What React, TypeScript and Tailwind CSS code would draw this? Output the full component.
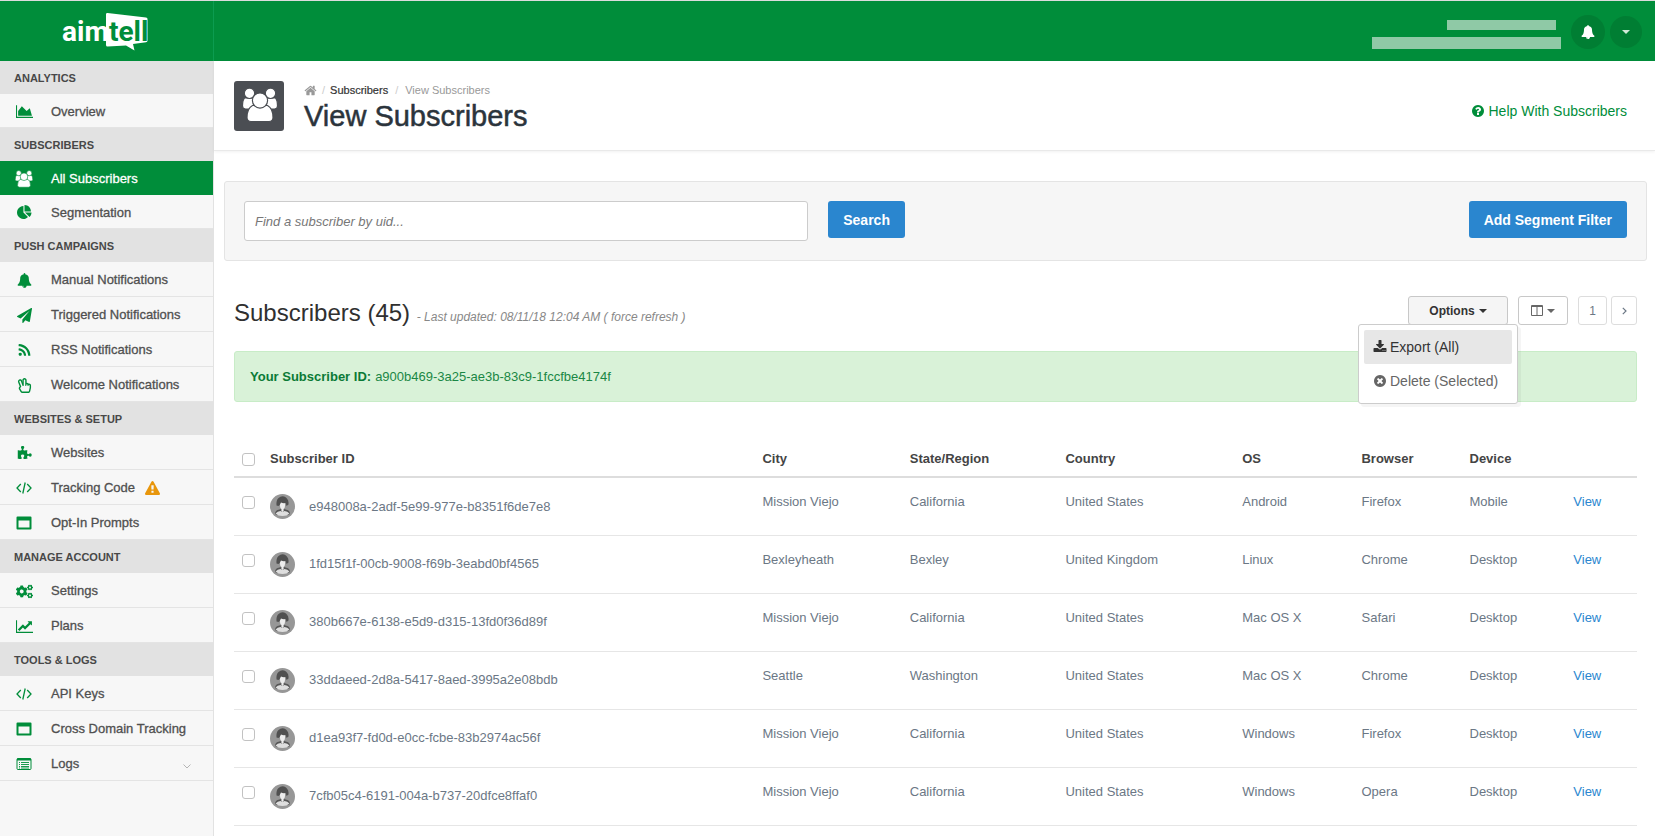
import React from "react";
import type { ReactNode } from "react";
import { FaRegHandPeace, FaCogs } from "react-icons/fa";

const PATHS = {
  area: "M2048 1536v128h-2048v-1536h128v1408h1920zm-384-1024l256 896h-1664v-576l448-576 576 576z",
  line: "M2048 1536v128h-2048v-1536h128v1408h1920zm-128-1248v435q0 21-19.5 29.5t-35.5-7.5l-121-121-633 633q-10 10-23 10t-23-10l-233-233-416 416-192-192 585-585q10-10 23-10t23 10l233 233 464-464-121-121q-16-16-7.5-35.5t29.5-19.5h435q14 0 23 9t9 23z",
  pie: "M768 890l546 546q-106 108-247.5 168t-298.5 60q-209 0-385.5-103t-279.5-279.5-103-385.5 103-385.5 279.5-279.5 385.5-103v762zm187 6h773q0 157-60 298.5t-168 247.5zm709-128h-768v-768q209 0 385.5 103t279.5 279.5 103 385.5z",
  bell: "M912 1696q0-16-16-16-59 0-101.5-42.5t-42.5-101.5q0-16-16-16t-16 16q0 73 51.5 124.5t124.5 51.5q16 0 16-16zm816-288q0 52-38 90t-90 38h-448q0 106-75 181t-181 75-181-75-75-181h-448q-52 0-90-38t-38-90q50-42 91-88t85-119.5 74.5-158.5 50-206 19.5-260q0-152 117-282.5t307-158.5q-8-19-8-39 0-40 28-68t68-28 68 28 28 68q0 20-8 39 190 28 307 158.5t117 282.5q0 139 19.5 260t50 206 74.5 158.5 85 119.5 91 88z",
  plane: "M1764 11q33 24 27 64l-256 1536q-5 29-32 45-14 8-31 8-11 0-24-5l-453-185-242 295q-18 23-49 23-13 0-22-4-19-7-30.5-23.5t-11.5-36.5v-349l864-1059-1069 925-395-162q-37-14-40-55-2-40 32-59l1664-960q15-9 32-9 20 0 36 11z",
  rss: "M576 1344q0 80-56 136t-136 56-136-56-56-136 56-136 136-56 136 56 56 136zm512 123q2 28-17 48-18 21-47 21h-135q-25 0-43-16.5t-20-41.5q-22-229-184.5-391.5t-391.5-184.5q-25-2-41.5-20t-16.5-43v-135q0-29 21-47 17-17 43-17h5q160 13 306 80.5t259 181.5q114 113 181.5 259t80.5 306zm512 2q2 27-18 47-18 20-46 20h-143q-26 0-44.5-17.5t-19.5-42.5q-12-215-101-408.5t-231.5-336-336-231.5-408.5-102q-25-1-42.5-19.5t-17.5-43.5v-143q0-28 20-46 18-18 44-18h3q262 13 501.5 120t425.5 294q187 186 294 425.5t120 501.5z",
  puzzle: "M1755 1083q0 81-44.5 135t-123.5 54q-41 0-77.5-17.5t-59-38-56.5-38-71-17.5q-110 0-110 124 0 39 16 115t15 115v5q-22 0-33 1-34 3-97.5 11.5t-115.5 13.5-98 5q-61 0-103-26.5t-42-83.5q0-37 17.5-71t38-56.5 38-59 17.5-77.5q0-79-54-123.5t-135-44.5q-84 0-143 45.5t-59 127.5q0 43 15 83t33.5 64.5 33.5 53 15 50.5q0 45-46 89-37 35-117 35-95 0-245-24-9-2-27.5-4t-27.5-4l-13-2q-1 0-3-1-2 0-2-1v-1024q2 1 17.5 3.5t34 5 21.5 3.5q150 24 245 24 80 0 117-35 46-44 46-89 0-22-15-50.5t-33.5-53-33.5-64.5-15-83q0-82 59-127.5t144-45.5q80 0 134 44.5t54 123.5q0 41-17.5 77.5t-38 59-38 56.5-17.5 71q0 57 42 83.5t103 26.5q64 0 180-15t163-17v2q-1 2-3.5 17.5t-5 34-3.5 21.5q-24 150-24 245 0 80 35 117 44 46 89 46 22 0 50.5-15t53-33.5 64.5-33.5 83-15q82 0 127.5 59t45.5 143z",
  download: "M1344 1344q0-26-19-45t-45-19-45 19-19 45 19 45 45 19 45-19 19-45zm256 0q0-26-19-45t-45-19-45 19-19 45 19 45 45 19 45-19 19-45zm128-224v320q0 40-28 68t-68 28h-1472q-40 0-68-28t-28-68v-320q0-40 28-68t68-28h465l135 136q58 56 136 56t136-56l136-136h464q40 0 68 28t28 68zm-325-569q17 41-14 70l-448 448q-18 19-45 19t-45-19l-448-448q-31-29-14-70 17-39 59-39h256v-448q0-26 19-45t45-19h256q26 0 45 19t19 45v448h256q42 0 59 39z",
  times: "M1277 1122q0-26-19-45l-181-181 181-181q19-19 19-45 0-27-19-46l-90-90q-19-19-46-19-26 0-45 19l-181 181-181-181q-19-19-45-19-27 0-46 19l-90 90q-19 19-19 46 0 26 19 45l181 181-181 181q-19 19-19 45 0 27 19 46l90 90q19 19 46 19 26 0 45-19l181-181 181 181q19 19 45 19 27 0 46-19l90-90q19-19 19-46zm387-226q0 209-103 385.5t-279.5 279.5-385.5 103-385.5-103-279.5-279.5-103-385.5 103-385.5 279.5-279.5 385.5-103 385.5 103 279.5 279.5 103 385.5z",
  warning: "M1024 1375v-190q0-14-9.5-23.5t-22.5-9.5h-192q-13 0-22.5 9.5t-9.5 23.5v190q0 14 9.5 23.5t22.5 9.5h192q13 0 22.5-9.5t9.5-23.5zm-2-374l18-459q0-12-10-19-13-11-24-11h-220q-11 0-24 11-10 7-10 21l17 457q0 10 10 16.5t24 6.5h185q14 0 23.5-6.5t10.5-16.5zm-14-934l768 1408q35 63-2 126-17 29-46.5 46t-63.5 17h-1536q-34 0-63.5-17t-46.5-46q-37-63-2-126l768-1408q17-31 47-49t65-18 65 18 47 49z",
  home: "M1472 992v480q0 26-19 45t-45 19h-384v-384h-256v384h-384q-26 0-45-19t-19-45v-480q0-1 .5-3t.5-3l575-474 575 474q1 2 1 6zm223-69l-62 74q-8 9-21 11h-3q-13 0-21-7l-692-577-692 577q-12 8-24 7-13-2-21-11l-62-74q-8-10-7-23.5t11-21.5l719-599q32-26 76-26t76 26l244 204v-195q0-14 9-23t23-9h192q14 0 23 9t9 23v408l219 182q10 8 11 21.5t-7 23.5z",
  question: "M1024 1376v-192q0-14-9-23t-23-9h-192q-14 0-23 9t-9 23v192q0 14 9 23t23 9h192q14 0 23-9t9-23zm256-672q0-88-55.5-163t-138.5-116-170-41q-243 0-371 213-15 24 8 42l132 100q7 6 19 6 16 0 25-12 53-68 86-92 34-24 86-24 48 0 85.5 26t37.5 59q0 38-20 61t-68 45q-63 28-115.5 86.5t-52.5 125.5v36q0 14 9 23t23 9h192q14 0 23-9t9-23q0-19 21.5-49.5t54.5-49.5q32-18 49-28.5t46-35 44.5-48 28-60.5 12.5-81zm384 192q0 209-103 385.5t-279.5 279.5-385.5 103-385.5-103-279.5-279.5-103-385.5 103-385.5 279.5-279.5 385.5-103 385.5 103 279.5 279.5 103 385.5z",
};

function Glyph({ name, size = 14, wide = false }: { name: keyof typeof PATHS; size?: number; wide?: boolean }) {
  return (
    <svg aria-hidden="true" className="block shrink-0" height={size} width={wide ? Math.round((size * 8) / 7) : size} viewBox={wide ? "0 0 2048 1792" : "0 0 1792 1792"} fill="currentColor">
      <path d={PATHS[name]} />
    </svg>
  );
}

function UsersIcon({ size, gap }: { size: number; gap: string }) {
  return (
    <svg aria-hidden="true" className="block" width={size} height={size} viewBox="9.5 6 36 36" fill="currentColor" stroke={gap} strokeWidth="1.2">
      <path d="M12 17h8q2 4 1 7l-3 4h-5q-3 0-3-3 0-6 2-8z" />
      <path d="M43 17h-8q-2 4-1 7l3 4h5q3 0 3-3 0-6-2-8z" />
      <circle cx="17" cy="12.3" r="5.2" />
      <circle cx="38" cy="12.3" r="5.2" />
      <path d="M20 24.5h15q5.500 3 5.500 12 0 4-4 4h-18q-4 0-4-4 0-9 5.500-12z" />
      <circle cx="27.500" cy="19.500" r="7.600" />
    </svg>
  );
}

function CodeIcon() {
  return (
    <svg aria-hidden="true" className="block" width="16" height="14" viewBox="0 0 16 14" fill="none" stroke="currentColor" strokeWidth="1.300">
      <path d="M4.800 3 1 7l3.800 4M11.200 3 15 7l-3.800 4M9.200 1.500 6.800 12.500" />
    </svg>
  );
}

function WindowIcon() {
  return (
    <svg aria-hidden="true" className="block" width="16" height="14" viewBox="0 0 16 14" fill="currentColor" fillRule="evenodd">
      <path d="M1.500 0.500h13q1 0 1 1v11q0 1-1 1h-13q-1 0-1-1v-11q0-1 1-1zM2.500 4.500v7h11v-7z" />
    </svg>
  );
}

function ListIcon() {
  return (
    <svg aria-hidden="true" className="block" width="16" height="14" viewBox="0 0 16 14" fill="none" stroke="currentColor">
      <rect x="1" y="1.500" width="14" height="11" rx="1" />
      <path d="M1 2.500h14" strokeWidth="2" />
      <path d="M3 5.500h1M5 5.500h8M3 7.500h1M5 7.500h8M3 9.500h1M5 9.500h8M3 11h1M5 11h8" strokeWidth="0.900" />
    </svg>
  );
}

function Caret() {
  return (
    <svg aria-hidden="true" className="block" width="8" height="4" viewBox="0 0 8 4" fill="currentColor">
      <path d="M0 0h8L4 4z" />
    </svg>
  );
}

function Logo() {
  return (
    <svg role="img" aria-label="aimtell" width="90" height="42" viewBox="0 0 90 42" className="block font-['Liberation_Sans_Narrow','Roboto',sans-serif] font-bold">
      <path d="M48.500 4 87 8.500q1.500.2 1.500 1.500v21.500q0 1.500-1.500 1.700L74 35l1.500 6.500L67 36.500 48.500 37.500q-1.500 0-1.500-1.500V5.300Q47 3.900 48.500 4z" fill="#fff" />
      <text x="3" y="32" fontSize="28" fill="#fff">aim</text>
      <text x="50" y="32" fontSize="28" fill="#008d3a">tell</text>
    </svg>
  );
}

function Avatar() {
  return (
    <svg aria-hidden="true" className="block shrink-0" width="25" height="25" viewBox="0 0 25 25">
      <circle cx="12.500" cy="12.500" r="12.500" fill="#979797" />
      <path d="M5 20q0-3.500 3.500-4.200l2.500-.8h3l2.500.8Q20 16.500 20 20l-2 1H7z" fill="#555" />
      <path d="M5.500 19.500q2-2.300 5-2.500l2 1 2-1q3 .2 5 2.500-2.500 2.500-7 2.500t-7-2.500z" fill="#dedede" />
      <path d="M10 8h5v4q0 2-1.400 3v2l-1.100 1-1.100-1v-2Q10 14 10 12z" fill="#ededed" />
      <path d="M6.500 11.500Q6 6 8.500 4q3.500-3 7.500-.5 3 2.500 2.500 7l-2 1.500-.8-3Q13 9.500 11 8.500q-1 2.500-2.500 3.500z" fill="#505050" />
    </svg>
  );
}

type Item = { label: string; icon: ReactNode; active?: boolean; warn?: boolean; expandable?: boolean };
type Section = { title: string; compact?: boolean; items: Item[] };

const SECTIONS: Section[] = [
  { title: "Analytics", compact: true, items: [{ label: "Overview", icon: <Glyph name="area" size={15} wide /> }] },
  {
    title: "Subscribers",
    compact: true,
    items: [
      { label: "All Subscribers", icon: <UsersIcon size={18} gap="#008d3a" />, active: true },
      { label: "Segmentation", icon: <Glyph name="pie" size={15} /> },
    ],
  },
  {
    title: "Push Campaigns",
    items: [
      { label: "Manual Notifications", icon: <Glyph name="bell" size={15} /> },
      { label: "Triggered Notifications", icon: <Glyph name="plane" size={15} /> },
      { label: "RSS Notifications", icon: <Glyph name="rss" size={15} /> },
      { label: "Welcome Notifications", icon: <FaRegHandPeace size={15} /> },
    ],
  },
  {
    title: "Websites & Setup",
    items: [
      { label: "Websites", icon: <Glyph name="puzzle" size={15} /> },
      { label: "Tracking Code", icon: <CodeIcon />, warn: true },
      { label: "Opt-In Prompts", icon: <WindowIcon /> },
    ],
  },
  {
    title: "Manage Account",
    items: [
      { label: "Settings", icon: <FaCogs size={17} /> },
      { label: "Plans", icon: <Glyph name="line" size={15} wide /> },
    ],
  },
  {
    title: "Tools & Logs",
    items: [
      { label: "API Keys", icon: <CodeIcon /> },
      { label: "Cross Domain Tracking", icon: <WindowIcon /> },
      { label: "Logs", icon: <ListIcon />, expandable: true },
    ],
  },
];

const ROWS = [
  ["e948008a-2adf-5e99-977e-b8351f6de7e8", "Mission Viejo", "California", "United States", "Android", "Firefox", "Mobile"],
  ["1fd15f1f-00cb-9008-f69b-3eabd0bf4565", "Bexleyheath", "Bexley", "United Kingdom", "Linux", "Chrome", "Desktop"],
  ["380b667e-6138-e5d9-d315-13fd0f36d89f", "Mission Viejo", "California", "United States", "Mac OS X", "Safari", "Desktop"],
  ["33ddaeed-2d8a-5417-8aed-3995a2e08bdb", "Seattle", "Washington", "United States", "Mac OS X", "Chrome", "Desktop"],
  ["d1ea93f7-fd0d-e0cc-fcbe-83b2974ac56f", "Mission Viejo", "California", "United States", "Windows", "Firefox", "Desktop"],
  ["7cfb05c4-6191-004a-b737-20dfce8ffaf0", "Mission Viejo", "California", "United States", "Windows", "Opera", "Desktop"],
];

const CHECKBOX = "block size-[13px] appearance-none rounded-[3px] border border-[#c2c2c2] bg-white checked:bg-[#2a86cf]";

function TopBar() {
  return (
    <header className="flex h-[61px] items-stretch border-t border-[#dcdcdc] bg-[#008d3a]">
      <a href="#home" className="flex w-[214px] shrink-0 justify-center border-r border-[#0c9c50] pr-1.5 pt-2">
        <Logo />
      </a>
      <div className="flex flex-1 items-center justify-end pr-[13px] pt-0.5">
        <div className="mr-2.5 flex flex-col items-end gap-[7px] pt-1">
          <span className="mr-[5px] h-2.5 w-[109px] bg-[#8fc9a6]" />
          <span className="h-3 w-[189px] bg-[#8fc9a6]" />
        </div>
        <button type="button" aria-label="Notifications" className="mr-[5px] flex size-[34px] items-center justify-center rounded-full bg-[#007e33] text-white">
          <Glyph name="bell" />
        </button>
        <button type="button" aria-label="Account menu" className="flex size-8 items-center justify-center rounded-full bg-[#007e33] text-[#d2ead9]">
          <Caret />
        </button>
      </div>
    </header>
  );
}

function Sidebar() {
  return (
    <nav aria-label="Main" className="w-[214px] shrink-0 border-r border-[#e2e2e2] bg-[#f7f7f7]">
      {SECTIONS.map((section) => (
        <section key={section.title}>
          <h2 className="flex h-[33px] items-center bg-[#e2e2e2] px-3.5 pt-0.5 text-[11px] font-bold uppercase text-[#484848]">{section.title}</h2>
          <ul>
            {section.items.map((item) => (
              <li key={item.label}>
                <a
                  href="#nav"
                  className={`flex items-center border-b pl-3.5 pt-0.5 text-[13px] [-webkit-text-stroke:0.3px] ${section.compact ? "h-[34px]" : "h-[35px]"} ${
                    item.active ? "border-[#008d3a] bg-[#008d3a] text-white" : "border-[#e4e4e4] text-[#505050]"
                  }`}
                >
                  <span className={`mr-[17px] flex w-5 justify-center ${item.active ? "text-white" : "text-[#008d3a]"}`}>{item.icon}</span>
                  <span className="whitespace-nowrap">{item.label}</span>
                  {item.warn && (
                    <span className="ml-2.5 text-[#e8960c]">
                      <Glyph name="warning" size={15} />
                    </span>
                  )}
                  {item.expandable && (
                    <svg aria-hidden="true" className="ml-auto mr-[22px] mt-1" width="8" height="5" viewBox="0 0 8 5" fill="none" stroke="#b5b5b5">
                      <path d="M.5.5 4 4 7.500.5" />
                    </svg>
                  )}
                </a>
              </li>
            ))}
          </ul>
        </section>
      ))}
    </nav>
  );
}

function PageHeader() {
  return (
    <div className="flex items-start border-b border-[#e9e9e9] pb-[18px] pl-5 pr-7 pt-5 shadow-[0_1px_3px_rgba(0,0,0,0.06)]">
      <span className="flex size-[50px] justify-end rounded-[3px] bg-[#4b4e53] pr-1.5 pt-1.5 text-white">
        <UsersIcon size={36} gap="#4b4e53" />
      </span>
      <div className="ml-5">
        <nav aria-label="Breadcrumb" className="flex h-[19px] items-center text-[11px] text-[#999]">
          <a href="#home" aria-label="Home">
            <Glyph name="home" size={13} />
          </a>
          <span className="mx-[5px] text-[#ccc]">/</span>
          <a href="#subscribers" className="text-[#333] [-webkit-text-stroke:0.2px]">Subscribers</a>
          <span className="mx-[7px] text-[#ccc]">/</span>
          <span>View Subscribers</span>
        </nav>
        <h1 className="text-[29px] leading-8 text-[#2b343c] [-webkit-text-stroke:0.5px]">View Subscribers</h1>
      </div>
      <a href="#help" className="ml-auto mt-5 flex items-center gap-1 text-sm text-[#008d3a]">
        <Glyph name="question" />
        Help With Subscribers
      </a>
    </div>
  );
}

function FilterBar() {
  return (
    <form className="ml-2.5 mr-2 mt-[30px] flex items-start rounded-[3px] border border-[#e4e4e4] bg-[#f6f6f6] px-[19px] py-[19px]" onSubmit={(e) => e.preventDefault()}>
      <input
        type="text"
        aria-label="Find a subscriber by uid"
        placeholder="Find a subscriber by uid..."
        className="h-10 w-[40.8%] rounded-[3px] border border-[#ccc] bg-white px-2.5 text-[13px] italic placeholder:text-[#777]"
      />
      <button type="submit" className="ml-5 h-[37px] rounded-[3px] bg-[#2a86cf] px-[15px] text-sm font-bold text-white">Search</button>
      <button type="button" className="ml-auto h-[37px] rounded-[3px] bg-[#2a86cf] px-[15px] text-sm font-bold text-white">Add Segment Filter</button>
    </form>
  );
}

function Toolbar() {
  return (
    <div className="mt-[35px] flex h-[33px] items-start">
      <h2 className="whitespace-nowrap pt-px text-2xl leading-8 text-[#303030]">
        Subscribers (45) <small className="text-xs italic text-[#888]">- Last updated: 08/11/18 12:04 AM ( <a href="#refresh">force refresh</a> )</small>
      </h2>
      <div className="ml-auto flex">
        <div className="relative">
          <button type="button" aria-expanded="true" className="flex h-[29px] w-[100px] items-center justify-center gap-1 rounded-[3px] border border-[#c8c8c8] bg-[#f5f5f5] text-xs font-bold text-[#333]">
            Options
            <Caret />
          </button>
          <div role="menu" className="absolute -right-2.5 top-7 z-10 w-40 rounded-[3px] border border-[#ccc] bg-white p-[5px] shadow-[3px_3px_0_rgba(0,0,0,0.04)]">
            <button type="button" role="menuitem" className="flex h-[34px] w-full items-center gap-[3px] rounded-[2px] bg-[#e7e7e7] pl-[9px] text-sm text-[#333]">
              <Glyph name="download" />
              Export (All)
            </button>
            <button type="button" role="menuitem" className="flex h-[34px] w-full items-center gap-[3px] rounded-[2px] pl-[9px] text-sm text-[#666]">
              <Glyph name="times" />
              Delete (Selected)
            </button>
          </div>
        </div>
        <button type="button" aria-label="Columns" className="ml-2.5 flex h-[29px] w-[50px] items-center justify-center gap-1 rounded-[3px] border border-[#c8c8c8] bg-white text-[#666]">
          <svg aria-hidden="true" width="12" height="11" viewBox="0 0 12 11" fill="none" stroke="currentColor">
            <path d="M.5.5h11v10H.5zM6 .5v10M.5 1.500h11" />
          </svg>
          <Caret />
        </button>
        <button type="button" className="ml-2.5 h-[29px] w-[29px] rounded-[3px] border border-[#ddd] text-xs text-[#6b7785]">1</button>
        <button type="button" aria-label="Next page" className="ml-1 flex h-[29px] w-[26px] items-center justify-center rounded-[3px] border border-[#ddd] text-[#6b7785]">
          <svg aria-hidden="true" width="5" height="8" viewBox="0 0 5 8" fill="none" stroke="currentColor" strokeWidth="1.200">
            <path d="M.8.8 4 4 .8 7.200" />
          </svg>
        </button>
      </div>
    </div>
  );
}

function SubscriberTable() {
  return (
    <table className="mt-10 w-full table-fixed text-left text-[13px] leading-[18px]">
      <thead className="text-[#444]">
        <tr className="h-[35px] border-b-2 border-[#ddd]">
          <th className="w-7 pl-2">
            <input type="checkbox" aria-label="Select all subscribers" className={CHECKBOX} />
          </th>
          <th className="w-[35.1%] px-2">Subscriber ID</th>
          <th className="w-[10.5%] px-2">City</th>
          <th className="w-[11.1%] px-2">State/Region</th>
          <th className="w-[12.6%] px-2">Country</th>
          <th className="w-[8.5%] px-2">OS</th>
          <th className="w-[7.7%] px-2">Browser</th>
          <th className="w-[7.4%] px-2">Device</th>
          <th className="px-2" aria-label="Actions" />
        </tr>
      </thead>
      <tbody className="text-[#6b7785]">
        {ROWS.map(([id, ...cells]) => (
          <tr key={id} className="h-[58px] border-b border-[#e6e6e6] align-top">
            <td className="pl-2 pt-[18px]">
              <input type="checkbox" aria-label={`Select ${id}`} className={CHECKBOX} />
            </td>
            <td className="px-2 pt-4">
              <div className="flex items-center gap-3.5">
                <Avatar />
                {id}
              </div>
            </td>
            {cells.map((cell, i) => (
              <td key={i} className="px-2 pt-[15px]">{cell}</td>
            ))}
            <td className="px-2 pt-[15px]">
              <a href="#view" className="text-[#2a86cf]">View</a>
            </td>
          </tr>
        ))}
      </tbody>
    </table>
  );
}

export default function App() {
  return (
    <div className="flex min-h-screen flex-col bg-white font-['Liberation_Sans',Arial,sans-serif]">
      <TopBar />
      <div className="flex flex-1">
        <Sidebar />
        <main className="min-w-0 flex-1">
          <PageHeader />
          <FilterBar />
          <div className="pl-5 pr-[18px]">
            <Toolbar />
            <p className="mt-[22px] flex h-[51px] items-center gap-1 rounded-[3px] border border-[#c8ecc7] bg-[#d9f2d8] px-[15px] text-[13px] text-[#1a8745]">
              <strong className="text-[#0b7a36]">Your Subscriber ID:</strong>
              a900b469-3a25-ae3b-83c9-1fccfbe4174f
            </p>
            <SubscriberTable />
          </div>
        </main>
      </div>
    </div>
  );
}
